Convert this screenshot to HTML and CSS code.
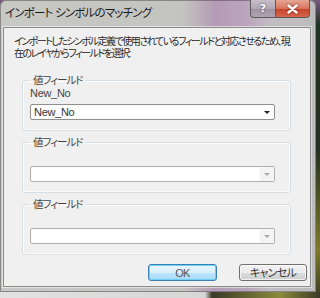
FILE: index.html
```html
<!DOCTYPE html>
<html lang="ja">
  <head>
    <meta charset="UTF-8" />
    <meta name="viewport" content="width=device-width, initial-scale=1.0" />
    <title>インポート シンボルのマッチング</title>
    <link rel="stylesheet" href="styles.css">
  </head>
  <body>
    <div class="window">
      <div class="titlebar">
        <span class="title">インポート シンボルのマッチング</span>
        <div class="caption-buttons">
          <button class="cap-help">?</button>
          <button class="cap-close">
            <svg width="11" height="10" viewBox="0 0 11 10">
              <path d="M1.5 1.5 L9.5 8.5 M9.5 1.5 L1.5 8.5" stroke="#fff" stroke-width="2.4" stroke-linecap="round" />
            </svg>
          </button>
        </div>
      </div>

      <div class="client">
        <p class="intro">インポートしたシンボル定義で使用されているフィールドと対応させるため、現<br>在のレイヤからフィールドを選択:</p>

        <fieldset class="group">
          <legend>値フィールド</legend>
          <div class="field-label">New_No</div>
          <div class="combo">
            <span class="combo-text">New_No</span>
            <span class="combo-arrow"></span>
          </div>
        </fieldset>

        <fieldset class="group">
          <legend>値フィールド</legend>
          <div class="field-label"></div>
          <div class="combo disabled">
            <span class="combo-text"></span>
            <span class="combo-arrow"></span>
          </div>
        </fieldset>

        <fieldset class="group">
          <legend>値フィールド</legend>
          <div class="field-label"></div>
          <div class="combo disabled">
            <span class="combo-text"></span>
            <span class="combo-arrow"></span>
          </div>
        </fieldset>

        <div class="buttons">
          <button class="btn btn-default">OK</button>
          <button class="btn">キャンセル</button>
        </div>
      </div>
    </div>
    <div class="desktop-bottom"></div>
  </body>
</html>
```

FILE: styles.css
```css
body {
  margin: 0;
  width: 320px;
  height: 298px;
  overflow: hidden;
  font-family: "Liberation Sans", "Noto Sans CJK JP", sans-serif;
  font-feature-settings: "palt";
  background: linear-gradient(to bottom, #7a5a80 0, #1f3324 24px, #24301f 150px, #7d7a2c 250px, #3b3a22 298px);
}
.window {
  width: 316px;
  height: 292px;
  box-sizing: border-box;
  padding: 0 5px 5px 3px;
  display: flex;
  flex-direction: column;
  border-radius: 6px 6px 0 0;
  background: linear-gradient(to right, #c8c8c5 0, #c3c3bf 58%, #b59bb7 68%, #baa5bc 78%, #c2bec3 86%, #bcbcbc 100%);
  box-shadow: inset 0 0 0 1px rgba(60, 60, 60, 0.45);
}
.titlebar {
  height: 27px;
  display: flex;
  align-items: flex-start;
  flex-shrink: 0;
}
.title {
  margin: 6px 0 0 2px;
  font-size: 11.5px;
  line-height: 14px;
  color: #1a1a1a;
  letter-spacing: -0.8px;
}
.caption-buttons {
  display: flex;
  margin-left: auto;
  margin-right: 1px;
}
.caption-buttons button {
  height: 18px;
  border: 1px solid #5a5a5a;
  border-top: none;
  padding: 0;
  display: flex;
  align-items: center;
  justify-content: center;
}
.cap-help {
  width: 26px;
  border-radius: 0 0 0 4px;
  background: linear-gradient(to bottom, #c7bec8 0, #b3a7b5 50%, #9d8fa0 51%, #b0a4b2 100%);
  color: #fff;
  font-family: "DejaVu Sans", sans-serif;
  font-weight: bold;
  font-size: 11px;
  text-shadow: 0 0 2px #333;
}
.cap-close {
  width: 34px;
  border-left: none !important;
  border-radius: 0 0 4px 0;
  background: linear-gradient(to bottom, #e7a593 0, #d77560 50%, #c4422a 51%, #d8674c 100%);
}
.cap-close svg {
  filter: drop-shadow(0 0 1px #6a1a10);
}
.client {
  flex: 1;
  border: 1px solid #8c8c8c;
  box-shadow: 0 0 0 1px rgba(255, 255, 255, 0.5);
  background: #f0f0f0;
  padding: 8px 3px 0 10px;
  font-size: 11px;
  color: #1e1e1e;
}
.intro {
  margin: 0;
  white-space: nowrap;
  font-size: 10px;
  line-height: 12px;
  letter-spacing: -1.5px;
  color: #262626;
}
.group {
  margin: 5px 0 0 8px;
  width: 269px;
  box-sizing: border-box;
  padding: 0 15px 10px 7px;
  border: 1px solid #d5dfe5;
  border-radius: 3px;
  box-shadow: inset 0 0 0 1px #fbfcfd;
}
.intro + .group {
  margin-top: 14px;
}
.group legend {
  margin-left: 0;
  padding: 0 2px 0 3px;
  font-size: 10.5px;
  line-height: 12px;
  color: #444;
  letter-spacing: -1px;
}
.field-label {
  height: 13px;
  line-height: 13px;
  margin-top: 1px;
  color: #444;
  letter-spacing: -0.3px;
}
.combo {
  margin-top: 4px;
  height: 16px;
  box-sizing: border-box;
  border: 1px solid #8f8f8f;
  border-radius: 2px;
  background: #fff;
  display: flex;
  align-items: center;
}
.combo-text {
  flex: 1;
  padding-left: 3px;
  line-height: 14px;
  color: #333;
  letter-spacing: -0.3px;
}
.combo-arrow {
  width: 14px;
  height: 14px;
  position: relative;
}
.combo-arrow::after {
  content: "";
  position: absolute;
  left: 4px;
  top: 6px;
  border-left: 3px solid transparent;
  border-right: 3px solid transparent;
  border-top: 3px solid #222;
}
.combo.disabled {
  border-color: #b0b0b0;
  background: #fbfbfb;
}
.combo.disabled .combo-text {
  height: 13px;
  background: #fff;
  margin: 0 1px;
}
.combo.disabled .combo-arrow {
  background: #f4f4f4;
}
.combo.disabled .combo-arrow::after {
  border-top-color: #a8a8a8;
}
.buttons {
  display: flex;
  justify-content: flex-end;
  gap: 22px;
  margin-top: 9px;
}
.btn {
  width: 68px;
  height: 17px;
  padding: 0;
  border: 1px solid #707070;
  border-radius: 3px;
  font-family: "Liberation Sans", "Noto Sans CJK JP", sans-serif;
  font-feature-settings: "palt";
  font-size: 11px;
  line-height: 14px;
  color: #333;
  letter-spacing: -0.7px;
  background: linear-gradient(to bottom, #f2f2f2 0, #ebebeb 50%, #dddddd 51%, #cfcfcf 100%);
  box-shadow: inset 0 0 0 1px rgba(255, 255, 255, 0.7);
}
.btn-default {
  width: 69px;
  border-color: #3c7fb1;
  color: #555;
  background: linear-gradient(to bottom, #eaf6fd 0, #d9f0fc 50%, #bee6fd 51%, #a7d9f5 100%);
  box-shadow: inset 0 0 0 1px #6fd1f7;
}
.desktop-bottom {
  height: 6px;
  background: linear-gradient(to right, #e2e2e2 0, #d6d6d6 205px, #3a3a28 212px, #8b8a3a 280px, #3a3a28 320px);
}
```
